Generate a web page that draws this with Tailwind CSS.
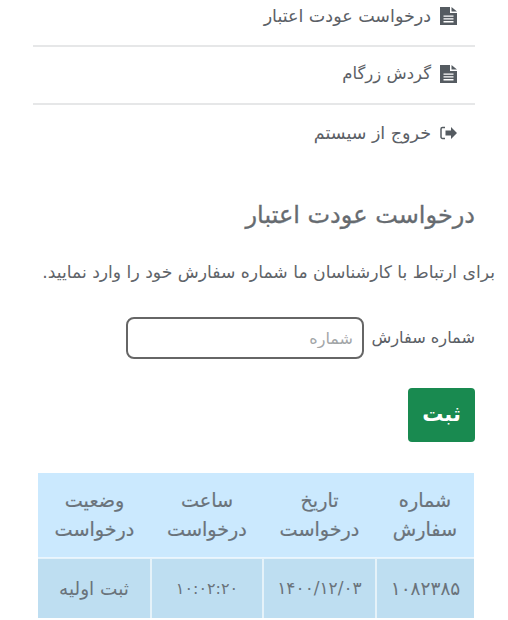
<!DOCTYPE html>
<html lang="fa" dir="rtl">
<head>
  <meta charset="UTF-8">
  <title>درخواست عودت اعتبار</title>
  <script src="https://cdn.jsdelivr.net/npm/@tailwindcss/browser@4"></script>
</head>
<body class="bg-white overflow-hidden h-[620px] font-['DejaVu_Sans',sans-serif] text-[#5b6066]">

  <!-- منو -->
  <nav class="mx-[33px] text-[17.5px] -mt-[11px]">
    <a class="flex items-center justify-start h-[58px] pr-[18px] pb-[2px] gap-[9px] border-b-2 border-[#e6e7e8]">
      <svg class="w-[17px] h-[20px] shrink-0" viewBox="0 0 17 20"><path fill="#555b61" d="M0 1h10v6h7v12H0zM11.500 1l5.500 4.500h-5.500z"/><path fill="#fff" d="M3.500 9.500h10v1.300h-10zM3.500 12.300h10v1.300h-10zM3.500 15.100h10v1.300h-10z"/></svg>
      <span>درخواست عودت اعتبار</span>
    </a>
    <a class="flex items-center justify-start h-[58px] pr-[18px] pb-[2px] gap-[9px] border-b-2 border-[#e6e7e8]">
      <svg class="w-[17px] h-[20px] shrink-0" viewBox="0 0 17 20"><path fill="#555b61" d="M0 1h10v6h7v12H0zM11.500 1l5.500 4.500h-5.500z"/><path fill="#fff" d="M3.500 9.500h10v1.300h-10zM3.500 12.300h10v1.300h-10zM3.500 15.100h10v1.300h-10z"/></svg>
      <span class="text-[16.5px]">گردش زرگام</span>
    </a>
    <a class="flex items-center justify-start h-[58px] pr-[18px] pb-[2px] gap-[9px]">
      <svg class="w-[17px] h-[14px] shrink-0" viewBox="0 0 17 14"><path fill="#555b61" d="M17 7l-6-6v3.500H5.500v5H11V13z"/><path fill="none" stroke="#555b61" stroke-width="1.500" d="M5 1.500H2.500a1.500 1.500 0 0 0-1.500 1.500v8a1.500 1.500 0 0 0 1.500 1.500H5"/></svg>
      <span>خروج از سیستم</span>
    </a>
  </nav>

  <main class="mr-[33px] ml-[34px]">
    <h1 class="mt-[37px] text-[24px] leading-[30px] font-normal text-[#666b70] [-webkit-text-stroke:0.3px_#666b70]">درخواست عودت اعتبار</h1>
    <p class="mt-[29px] -mr-[20px] -ml-[10px] text-[17.2px] leading-[26px] text-[#5f6469]">برای ارتباط با کارشناسان ما شماره سفارش خود را وارد نمایید.</p>

    <div class="mt-[32px] flex items-center gap-[8px]">
      <label class="w-[103px] text-[16.2px] whitespace-nowrap">شماره سفارش</label>
      <input type="text" placeholder="شماره" class="w-[238px] h-[42px] px-[9px] text-[16px] border-2 border-[#666] rounded-[8px] placeholder:text-[#a3a6a8] outline-none">
    </div>

    <button class="block mt-[29px] w-[67px] h-[54px] bg-[#198a50] text-white text-[21px] font-bold rounded-[4px]">ثبت</button>

    <table class="mt-[31px] mr-0 ml-auto w-[436px] -translate-x-[1px] table-fixed border-collapse text-center text-[19.2px] text-[#6a737b]">
      <thead>
        <tr class="h-[85px] bg-[#cbe9fe] leading-[29px] [-webkit-text-stroke:0.2px_#6a737b]">
          <th class="w-[98px] px-1 font-normal">شماره سفارش</th>
          <th class="w-[113px] px-1 font-normal">تاریخ درخواست</th>
          <th class="w-[112px] px-1 font-normal">ساعت درخواست</th>
          <th class="px-1 font-normal">وضعیت درخواست</th>
        </tr>
      </thead>
      <tbody>
        <tr class="h-[60px] bg-[#bedef1]">
          <td class="border-t-2 border-white/60 text-[18.5px]">۱۰۸۲۳۸۵</td>
          <td class="border-t-2 border-r-2 border-white/60 text-[17px]">۱۴۰۰/۱۲/۰۳</td>
          <td class="border-t-2 border-r-2 border-white/60 text-[16px]">۱۰:۰۲:۲۰</td>
          <td class="border-t-2 border-r-2 border-white/60 text-[18.5px]">ثبت اولیه</td>
        </tr>
      </tbody>
    </table>
  </main>
</body>
</html>
